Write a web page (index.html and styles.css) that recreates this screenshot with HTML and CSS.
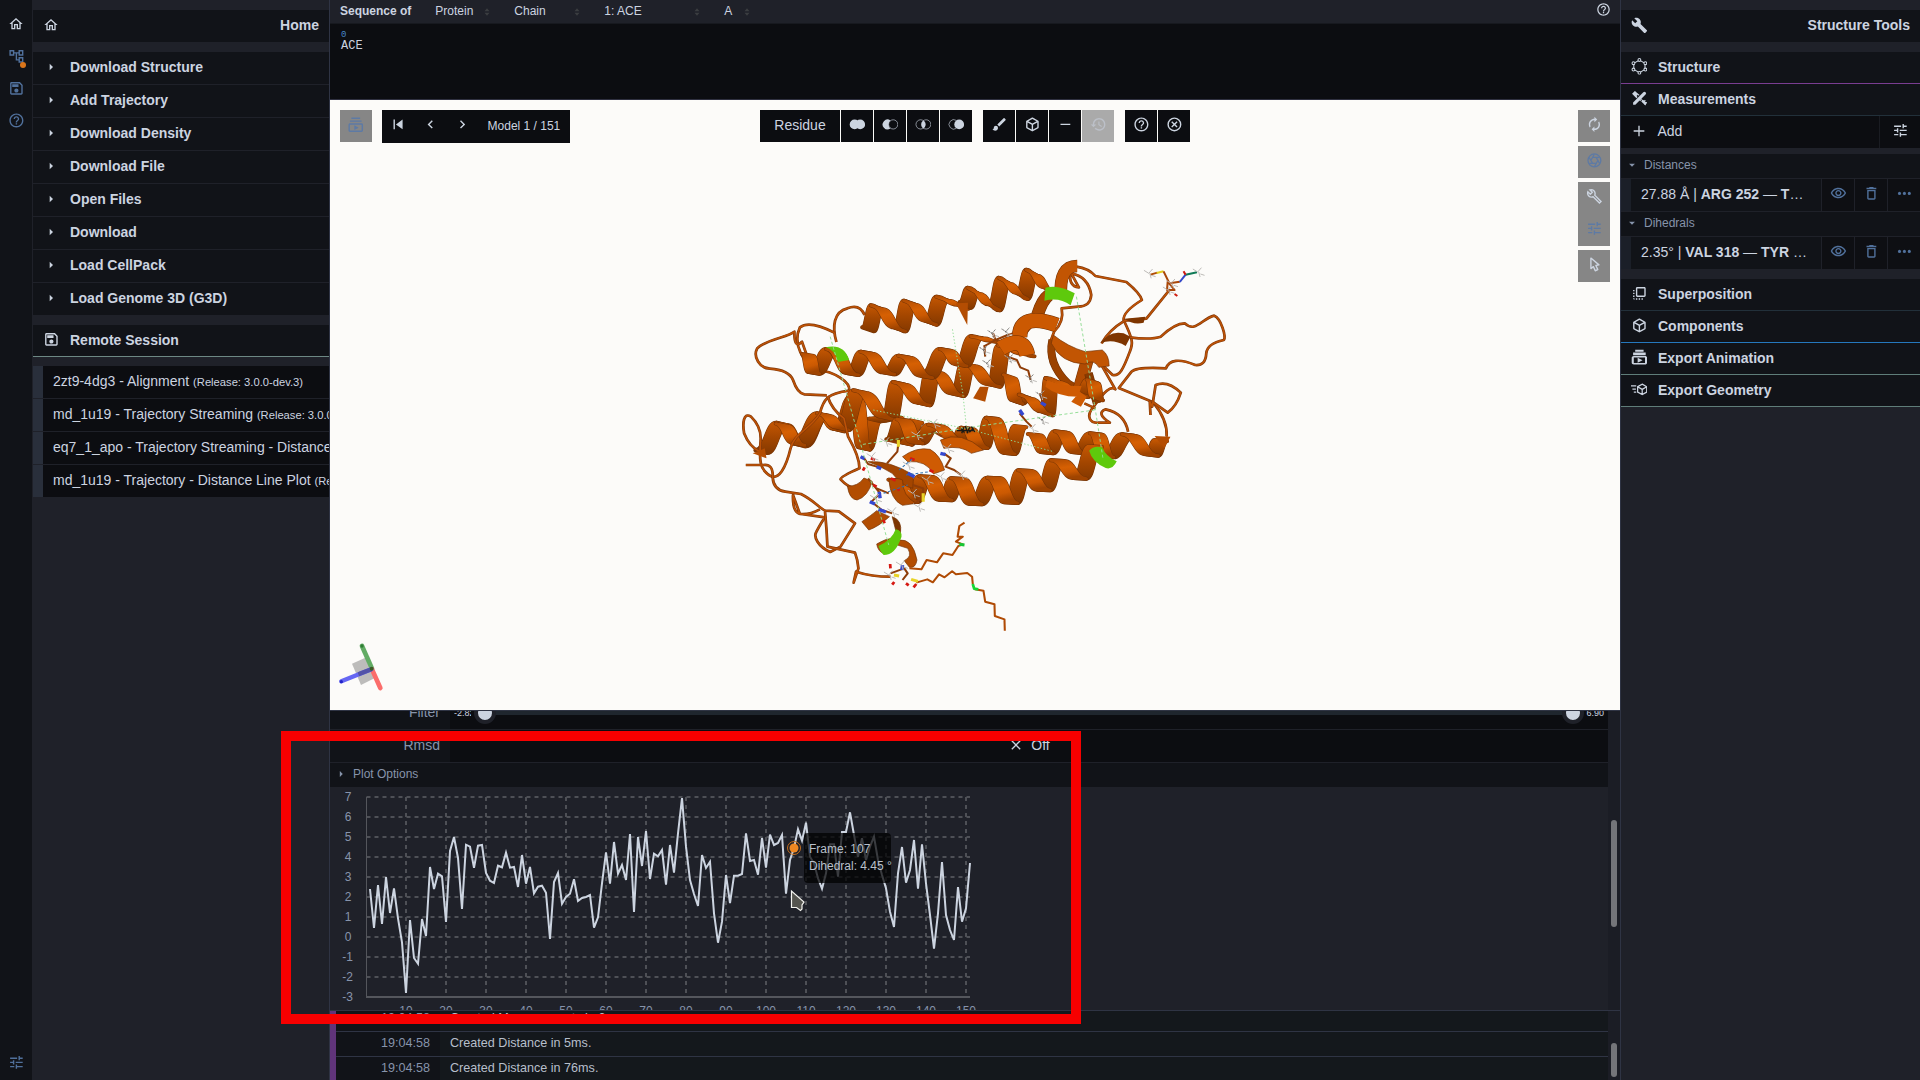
FILE: index.html
```html
<!DOCTYPE html>
<html lang="en">
<head>
<meta charset="utf-8">
<title>Mol* Viewer</title>
<link rel="stylesheet" href="styles.css">
</head>
<body>
<svg class="sprite" aria-hidden="true">
  <symbol id="home" viewBox="0 0 24 24"><path d="M12 5.69l5 4.5V18h-2v-6H9v6H7v-7.81l5-4.5M12 3L2 12h3v8h6v-6h2v6h6v-8h3L12 3z"/></symbol>
  <symbol id="tree" viewBox="0 0 24 24"><path d="M22 11V3h-7v3H9V3H2v8h7V8h2v10h4v3h7v-8h-7v3h-2V8h2v3h7zM7 9H4V5h3v4zm10 6h3v4h-3v-4zm0-10h3v4h-3V5z"/></symbol>
  <symbol id="save" viewBox="0 0 24 24"><path d="M17 3H5c-1.11 0-2 .9-2 2v14c0 1.1.89 2 2 2h14c1.1 0 2-.9 2-2V7l-4-4zm2 16H5V5h11.17L19 7.83V19zm-7-7c-1.66 0-3 1.34-3 3s1.34 3 3 3 3-1.34 3-3-1.34-3-3-3zM6 6h9v4H6z"/></symbol>
  <symbol id="help" viewBox="0 0 24 24"><path d="M11 18h2v-2h-2v2zm1-16C6.48 2 2 6.48 2 12s4.48 10 10 10 10-4.48 10-10S17.52 2 12 2zm0 18c-4.41 0-8-3.59-8-8s3.59-8 8-8 8 3.59 8 8-3.59 8-8 8zm0-14c-2.21 0-4 1.79-4 4h2c0-1.1.9-2 2-2s2 .9 2 2c0 2-3 1.75-3 5h2c0-2.25 3-2.5 3-5 0-2.21-1.79-4-4-4z"/></symbol>
  <symbol id="tune" viewBox="0 0 24 24"><path d="M3 17v2h6v-2H3zM3 5v2h10V5H3zm10 16v-2h8v-2h-8v-2h-2v6h2zM7 9v2H3v2h4v2h2V9H7zm14 4v-2H11v2h10zm-6-4h2V7h4V5h-4V3h-2v6z"/></symbol>
  <symbol id="wrench" viewBox="0 0 24 24"><path d="M22.7 19l-9.1-9.1c.9-2.3.4-5-1.5-6.9-2-2-5-2.4-7.4-1.3L9 6 6 9 1.6 4.7C.4 7.1.9 10.1 2.9 12.1c1.9 1.9 4.6 2.4 6.9 1.5l9.1 9.1c.4.4 1 .4 1.4 0l2.3-2.3c.5-.4.5-1.1.1-1.4z"/></symbol>
  <symbol id="wrench-line" viewBox="0 0 24 24"><path d="M21.5 19.2l-9-9c.9-2.3.4-4.600-1.2-6.200-1.600-1.600-3.800-2-5.800-1.400L9 6.200 6.200 9 2.600 5.500C2 7.500 2.400 9.700 4 11.300c1.600 1.600 3.900 2.100 6.200 1.200l9 9z" fill="none" stroke="currentColor" stroke-width="2"/></symbol>
  <symbol id="renew" viewBox="0 0 24 24"><path d="M12 6v3l4-4-4-4v3c-4.420 0-8 3.580-8 8 0 1.570.46 3.030 1.240 4.260L6.700 14.800c-.45-.83-.7-1.790-.7-2.800 0-3.310 2.690-6 6-6zm6.760 1.740L17.300 9.200c.44.84.7 1.790.7 2.800 0 3.310-2.690 6-6 6v-3l-4 4 4 4v-3c4.420 0 8-3.580 8-8 0-1.570-.46-3.030-1.240-4.260z"/></symbol>
  <symbol id="aperture" viewBox="0 0 24 24"><g fill="none" stroke="currentColor" stroke-width="1.800"><circle cx="12" cy="12" r="9.200"/><path d="M9.500 7.700h9.800M14.500 7.700l4.900 8.500M17 12l-4.900 8.800M14.500 16.300H4.700M9.500 16.300L4.600 7.800M7 12l4.900-8.800"/></g></symbol>
  <symbol id="eye" viewBox="0 0 24 24"><path d="M12 6c3.790 0 7.170 2.130 8.820 5.500C19.170 14.870 15.790 17 12 17s-7.170-2.130-8.820-5.500C4.830 8.130 8.210 6 12 6m0-2C7 4 2.730 7.110 1 11.500 2.730 15.890 7 19 12 19s9.270-3.110 11-7.500C21.270 7.110 17 4 12 4zm0 5c1.380 0 2.500 1.120 2.500 2.500S13.380 14 12 14s-2.500-1.120-2.500-2.500S10.620 9 12 9m0-2c-2.480 0-4.500 2.020-4.500 4.500S9.520 16 12 16s4.500-2.020 4.500-4.500S14.480 7 12 7z"/></symbol>
  <symbol id="trash" viewBox="0 0 24 24"><path d="M16 9v10H8V9h8m-1.500-6h-5l-1 1H5v2h14V4h-3.500l-1-1zM18 7H6v12c0 1.100.9 2 2 2h8c1.100 0 2-.9 2-2V7z"/></symbol>
  <symbol id="more" viewBox="0 0 24 24"><circle cx="5" cy="12" r="2.200"/><circle cx="12" cy="12" r="2.200"/><circle cx="19" cy="12" r="2.200"/></symbol>
  <symbol id="plus" viewBox="0 0 24 24"><path d="M20 13h-7v7h-2v-7H4v-2h7V4h2v7h7z"/></symbol>
  <symbol id="minus" viewBox="0 0 24 24"><path d="M19 13H5v-2h14z"/></symbol>
  <symbol id="close" viewBox="0 0 24 24"><path d="M19 6.410L17.590 5 12 10.590 6.410 5 5 6.410 10.590 12 5 17.590 6.410 19 12 13.410 17.590 19 19 17.590 13.410 12z"/></symbol>
  <symbol id="first" viewBox="0 0 24 24"><path d="M5 5h2v14H5zm3.500 7L18 19V5z"/></symbol>
  <symbol id="prev" viewBox="0 0 24 24"><path d="M15.410 7.410L14 6l-6 6 6 6 1.410-1.410L10.830 12z"/></symbol>
  <symbol id="next" viewBox="0 0 24 24"><path d="M10 6L8.590 7.410 13.170 12l-4.580 4.590L10 18l6-6z"/></symbol>
  <symbol id="right" viewBox="0 0 24 24"><path d="M10 17l5-5-5-5v10z"/></symbol>
  <symbol id="down" viewBox="0 0 24 24"><path d="M7 10l5 5 5-5z"/></symbol>
  <symbol id="sort" viewBox="4 1 16 22"><path d="M5 10l7-8 7 8zM5 14l7 8 7-8z"/></symbol>
  <symbol id="brush" viewBox="0 0 24 24"><path d="M7 14c-1.660 0-3 1.340-3 3 0 1.310-1.160 2-2 2 .92 1.220 2.490 2 4 2 2.210 0 4-1.790 4-4 0-1.660-1.340-3-3-3zm13.710-9.370l-1.340-1.340a.996.996 0 00-1.410 0L9 12.250 11.750 15l8.960-8.960a.996.996 0 000-1.410z"/></symbol>
  <symbol id="cube" viewBox="0 0 24 24"><path d="M21 16.500C21 16.880 20.790 17.210 20.470 17.380L12.570 21.820C12.410 21.940 12.210 22 12 22C11.790 22 11.590 21.940 11.430 21.820L3.530 17.380C3.210 17.210 3 16.880 3 16.500V7.500C3 7.120 3.210 6.790 3.530 6.620L11.430 2.180C11.590 2.060 11.790 2 12 2C12.210 2 12.410 2.060 12.570 2.180L20.470 6.620C20.790 6.790 21 7.120 21 7.500V16.500M12 4.150L6.040 7.500L12 10.850L17.960 7.500L12 4.150M5 15.910L11 19.290V12.580L5 9.210V15.910M19 15.910V9.210L13 12.580V19.290L19 15.910Z"/></symbol>
  <symbol id="history" viewBox="0 0 24 24"><path d="M13 3c-4.970 0-9 4.030-9 9H1l3.890 3.890.07.14L9 12H6c0-3.870 3.130-7 7-7s7 3.130 7 7-3.130 7-7 7c-1.930 0-3.680-.79-4.940-2.060l-1.420 1.420C8.270 19.990 10.510 21 13 21c4.970 0 9-4.030 9-9s-4.030-9-9-9zm-1 5v5l4.280 2.540.72-1.210-3.500-2.080V8H12z"/></symbol>
  <symbol id="cancel" viewBox="0 0 24 24"><g fill="none" stroke="currentColor" stroke-width="2"><circle cx="12" cy="12" r="9"/><path d="M8.200 8.200l7.600 7.600M15.800 8.200l-7.600 7.600"/></g></symbol>
  <symbol id="anim" viewBox="0 0 24 24"><path d="M4 6h16v2H4zM6 2h12v2H6zM20 10H4c-1.100 0-2 .9-2 2v8c0 1.100.9 2 2 2h16c1.100 0 2-.9 2-2v-8c0-1.100-.9-2-2-2zm0 10H4v-8h16v8zM10 12.700v6.600l6-3.300z"/></symbol>
  <symbol id="anim-bold" viewBox="0 0 24 24"><path d="M3 5h18v4H3zM6 1h12v3H6zM20 10H4c-1.500 0-3 1-3 2.500v7C1 21 2.500 22 4 22h16c1.500 0 3-1 3-2.500v-7c0-1.500-1.500-2.500-3-2.500zm0 10H4v-8h16v8zM9.500 12.500v7l7-3.500z"/></symbol>
  <symbol id="union" viewBox="0 0 24 24"><circle cx="8" cy="12" r="7"/><circle cx="16" cy="12" r="7"/></symbol>
  <symbol id="subtract" viewBox="0 0 24 24"><path d="M12 6.300A7 7 0 1 0 12 17.700A7.600 7.600 0 0 1 12 6.300z"/><circle cx="16" cy="12" r="6.600" fill="none" stroke="currentColor" stroke-width=".9"/></symbol>
  <symbol id="intersect" viewBox="0 0 24 24"><path d="M12 6.300a7 7 0 0 1 0 11.400a7 7 0 0 1 0-11.400z"/><g fill="none" stroke="currentColor" stroke-width=".9"><circle cx="8" cy="12" r="6.600"/><circle cx="16" cy="12" r="6.600"/></g></symbol>
  <symbol id="set" viewBox="0 0 24 24"><circle cx="16" cy="12" r="7"/><path d="M12 6.300A6.800 6.800 0 1 0 12 17.700" fill="none" stroke="currentColor" stroke-width=".9"/></symbol>
  <symbol id="ring" viewBox="0 0 24 24"><g fill="none" stroke="currentColor" stroke-width="1.500"><path d="M12 3l8 4.500v9L12 21l-8-4.500v-9z"/></g><g fill="#111318" stroke="currentColor" stroke-width="1.500"><circle cx="12" cy="2.800" r="2"/><circle cx="20.500" cy="7.500" r="2"/><circle cx="20.500" cy="16.500" r="2"/><circle cx="12" cy="21.200" r="2"/><circle cx="3.500" cy="16.500" r="2"/><circle cx="3.500" cy="7.500" r="2"/></g></symbol>
  <symbol id="ruler" viewBox="0 0 24 24"><path d="M20.800 3.200a2.200 2.200 0 0 0-3.200 0L3 17.800V21h3.200L20.800 6.400a2.200 2.200 0 0 0 0-3.200z"/><path d="M5.500 1.500L1.500 5.500l6.300 6.300 1.700-1.700-1.500-1.500 1.700-1.700 1.400 1.400 1.200-1.200zM6.500 2l-2 2 1.500 1.500 2-2zM14.500 16.200l6 6 2-4-5.800-4.600z"/><path d="M15.500 12.500l-3 3M17 18l3.500-3.500M19.500 20.500l3-3" stroke="currentColor" stroke-width="1.500"/></symbol>
  <symbol id="front" viewBox="0 0 24 24"><path d="M3 13h2v-2H3v2zm0 4h2v-2H3v2zm2 4v-2H3c0 1.100.89 2 2 2zM3 9h2V7H3v2zm12 12h2v-2h-2v2zm4-18H9c-1.110 0-2 .9-2 2v10c0 1.100.89 2 2 2h10c1.100 0 2-.9 2-2V5c0-1.100-.9-2-2-2zm0 12H9V5h10v10zm-8 6h2v-2h-2v2zm-4 0h2v-2H7v2z"/></symbol>
  <symbol id="geometry" viewBox="0 0 24 24"><g fill="none" stroke="currentColor" stroke-width="1.800"><path d="M16 4.500l6.500 3.700v7.600L16 19.500l-6.500-3.700V8.200zM9.500 8.200L16 12l6.500-3.800M16 12v7.500M0 7h7.500M2 11.500h5M4 16h3.500"/></g></symbol>
  <symbol id="cursor" viewBox="0 0 24 24"><path d="M10.070 14.270C10.570 14.030 11.160 14.250 11.400 14.750L13.700 19.740L15.500 18.890L13.190 13.910C12.950 13.410 13.170 12.810 13.670 12.580L13.950 12.500L16.250 12.050L8 5.120V15.900L9.820 14.430L10.070 14.270M13.640 21.970C13.140 22.210 12.540 22 12.310 21.500L10.130 16.760L7.620 18.780C7.450 18.920 7.240 19 7 19A1 1 0 0 1 6 18V3A1 1 0 0 1 7 2C7.240 2 7.470 2.090 7.640 2.230L19.140 11.860C19.570 12.220 19.620 12.850 19.270 13.270C19.120 13.450 18.910 13.570 18.700 13.610L15.540 14.230L17.740 18.960C18 19.460 17.760 20.050 17.260 20.280L13.640 21.970Z"/></symbol>
</svg>

<nav class="rail">
  <div class="rail-item active"><svg class="ic sm"><use href="#home"/></svg></div>
  <div class="rail-item"><svg class="ic"><use href="#tree"/></svg><i class="dot"></i></div>
  <div class="rail-item"><svg class="ic"><use href="#save"/></svg></div>
  <div class="rail-item"><svg class="ic"><use href="#help"/></svg></div>
  <div class="rail-item bottom"><svg class="ic"><use href="#tune"/></svg></div>
</nav>

<aside class="panel left">
  <header class="panel-title"><span class="lead"><svg class="ic sm"><use href="#home"/></svg></span><b>Home</b></header>
  <div class="actions">
    <div class="row"><span class="lead"><svg class="ic sm"><use href="#right"/></svg></span>Download Structure</div>
    <div class="row"><span class="lead"><svg class="ic sm"><use href="#right"/></svg></span>Add Trajectory</div>
    <div class="row"><span class="lead"><svg class="ic sm"><use href="#right"/></svg></span>Download Density</div>
    <div class="row"><span class="lead"><svg class="ic sm"><use href="#right"/></svg></span>Download File</div>
    <div class="row"><span class="lead"><svg class="ic sm"><use href="#right"/></svg></span>Open Files</div>
    <div class="row"><span class="lead"><svg class="ic sm"><use href="#right"/></svg></span>Download</div>
    <div class="row"><span class="lead"><svg class="ic sm"><use href="#right"/></svg></span>Load CellPack</div>
    <div class="row"><span class="lead"><svg class="ic sm"><use href="#right"/></svg></span>Load Genome 3D (G3D)</div>
  </div>
  <div class="row remote"><span class="lead"><svg class="ic"><use href="#save"/></svg></span>Remote Session</div>
  <div class="sessions">
    <div class="session">2zt9-4dg3 - Alignment <small>(Release: 3.0.0-dev.3)</small></div>
    <div class="session">md_1u19 - Trajectory Streaming <small>(Release: 3.0.0-dev.3)</small></div>
    <div class="session">eq7_1_apo - Trajectory Streaming - Distance</div>
    <div class="session">md_1u19 - Trajectory - Distance Line Plot <small>(Release: 3.0.0)</small></div>
  </div>
</aside>

<main class="center">
  <section class="sequence">
    <div class="seq-bar">
      <b>Sequence of</b>
      <span class="pick p1">Protein<svg><use href="#sort"/></svg></span>
      <span class="pick p2">Chain<svg><use href="#sort"/></svg></span>
      <span class="pick p3">1: ACE<svg><use href="#sort"/></svg></span>
      <span class="pick p4">A<svg><use href="#sort"/></svg></span>
      <svg class="ic sm seq-help"><use href="#help"/></svg>
    </div>
    <div class="seq-body"><span class="num">0</span><span>ACE</span></div>
  </section>

  <section class="viewport">
    <svg class="molecule" width="540" height="400" viewBox="0 0 1568 1200" preserveAspectRatio="none" id="molecule"></svg>
    <svg class="axes" width="80" height="80" viewBox="0 0 240 240">
      <path d="M66 101l40-18 27 62-40 20z" fill="#bdbcbb"/>
      <path d="M96 48l30 68" stroke="#62ab64" stroke-width="14" stroke-linecap="round"/>
      <path d="M126 118l25 56" stroke="#fb6d6b" stroke-width="14" stroke-linecap="round"/>
      <path d="M124 118L34 154" stroke="#6667f3" stroke-width="13" stroke-linecap="round"/>
      <path d="M124 118L85 133" stroke="#5353a8" stroke-width="13"/>
      <circle cx="96" cy="48" r="5" fill="#2f7d35"/><circle cx="34" cy="155" r="5" fill="#2424c8"/><circle cx="125" cy="116" r="6" fill="#3b5c23"/>
    </svg>
    <div class="toolbar">
      <div class="btn grey blue"><svg class="ic lg"><use href="#anim"/></svg></div>
      <div class="model">
        <svg class="ic"><use href="#first"/></svg><svg class="ic"><use href="#prev"/></svg><svg class="ic"><use href="#next"/></svg>
        <span>Model 1 / 151</span>
      </div>
      <div class="group g1">
        <div class="btn wide">Residue</div>
        <div class="btn"><svg class="ic"><use href="#union"/></svg></div>
        <div class="btn"><svg class="ic"><use href="#subtract"/></svg></div>
        <div class="btn"><svg class="ic"><use href="#intersect"/></svg></div>
        <div class="btn"><svg class="ic"><use href="#set"/></svg></div>
      </div>
      <div class="group g2">
        <div class="btn"><svg class="ic"><use href="#brush"/></svg></div>
        <div class="btn"><svg class="ic"><use href="#cube"/></svg></div>
        <div class="btn"><svg class="ic"><use href="#minus"/></svg></div>
        <div class="btn disabled"><svg class="ic"><use href="#history"/></svg></div>
      </div>
      <div class="group g3">
        <div class="btn"><svg class="ic"><use href="#help"/></svg></div>
        <div class="btn"><svg class="ic"><use href="#cancel"/></svg></div>
      </div>
      <div class="stack">
        <div class="btn grey"><svg class="ic"><use href="#renew"/></svg></div>
        <div class="btn grey blue"><svg class="ic"><use href="#aperture"/></svg></div>
        <div class="pair">
          <div class="btn grey"><svg class="ic"><use href="#wrench-line"/></svg></div>
          <div class="btn grey blue"><svg class="ic"><use href="#tune"/></svg></div>
        </div>
        <div class="btn grey"><svg class="ic"><use href="#cursor"/></svg></div>
      </div>
    </div>
  </section>

  <section class="plot-pane">
    <div class="pane-body">
      <div class="ctl filter"><label>Filter</label>
        <div class="ctl-val slider"><span class="lo">-2.82</span><div class="track"><i></i><i></i></div><span>6.90</span></div>
      </div>
      <div class="ctl"><label>Rmsd</label><div class="ctl-val toggle"><svg class="ic sm"><use href="#close"/></svg>Off</div></div>
      <div class="sub plot-options"><svg class="ic tiny"><use href="#right"/></svg>Plot Options</div>
      <div class="chart"><svg id="chart" width="680" height="240" viewBox="0 0 680 240"></svg></div>
    </div>
    <div class="scroll"><i class="thumb t1"></i></div>
  </section>

  <section class="log">
    <div class="pane-body">
      <div class="entry"><time>19:04:58</time><span>Created Measurements in 3ms.</span></div>
      <div class="entry"><time>19:04:58</time><span>Created Distance in 5ms.</span></div>
      <div class="entry"><time>19:04:58</time><span>Created Distance in 76ms.</span></div>
    </div>
    <div class="scroll"><i class="thumb t2"></i></div>
  </section>
</main>

<aside class="panel right">
  <header class="panel-title"><span class="lead"><svg class="ic"><use href="#wrench"/></svg></span><b>Structure Tools</b></header>
  <div class="row purple"><span class="lead"><svg class="ic"><use href="#ring"/></svg></span>Structure</div>
  <div class="row slate"><span class="lead"><svg class="ic"><use href="#ruler"/></svg></span>Measurements</div>
  <div class="add"><div class="add-main"><span class="lead"><svg class="ic sm"><use href="#plus"/></svg></span>Add</div><div class="add-opt"><svg class="ic"><use href="#tune"/></svg></div></div>
  <div class="sub"><svg class="ic tiny"><use href="#down"/></svg>Distances</div>
  <div class="measure"><div class="m-text">27.88 Å | <b>ARG 252</b> — <b>T</b>…</div><span><svg class="ic"><use href="#eye"/></svg></span><span><svg class="ic"><use href="#trash"/></svg></span><span><svg class="ic"><use href="#more"/></svg></span></div>
  <div class="sub second"><svg class="ic tiny"><use href="#down"/></svg>Dihedrals</div>
  <div class="measure"><div class="m-text">2.35° | <b>VAL 318</b> — <b>TYR</b> …</div><span><svg class="ic"><use href="#eye"/></svg></span><span><svg class="ic"><use href="#trash"/></svg></span><span><svg class="ic"><use href="#more"/></svg></span></div>
  <div class="row slate gap"><span class="lead"><svg class="ic"><use href="#front"/></svg></span>Superposition</div>
  <div class="row azure"><span class="lead"><svg class="ic"><use href="#cube"/></svg></span>Components</div>
  <div class="row teal"><span class="lead"><svg class="ic"><use href="#anim-bold"/></svg></span>Export Animation</div>
  <div class="row teal"><span class="lead"><svg class="ic"><use href="#geometry"/></svg></span>Export Geometry</div>
</aside>

<div class="highlight"></div>
<script src="script.js"></script>
</body>
</html>
```
FILE: styles.css
```css
* { box-sizing: border-box; }
body {
  margin: 0; width: 1920px; height: 1080px; overflow: hidden; display: flex; position: relative;
  background: #1f2129; color: #ccd4e0; font: 14px/32px "Liberation Sans", Arial, sans-serif;
}
svg { display: block; flex: none; }
.sprite { position: absolute; width: 0; height: 0; }
.ic { width: 16.8px; height: 16.8px; fill: currentColor; }
.ic.sm { width: 16px; height: 16px; }
.ic.lg { width: 17.500px; height: 17.500px; }
.ic.tiny { width: 14px; height: 14px; }

.rail { width: 33px; height: 1080px; background: #111318; border-right: 1px solid #1f2129; padding-top: 8px; display: flex; flex-direction: column; color: #51719c; }
.rail-item { height: 32px; display: flex; align-items: center; justify-content: center; position: relative; }
.rail-item.active { color: #ccd4e0; }
.rail-item.bottom { margin-top: auto; margin-bottom: 2px; }
.dot { position: absolute; left: 20px; top: 22px; width: 6px; height: 6px; border-radius: 3px; background: #d9751b; }

.panel { padding-top: 10px; overflow: hidden; line-height: 30px; }
.panel.left { width: 297px; border-right: 1px solid #2f3444; }
.panel.right { width: 300px; border-left: 1px solid #2f3444; }
.panel-title { height: 32px; margin-bottom: 10px; background: #111318; display: flex; justify-content: space-between; align-items: center; padding: 0 10px 2px 0; }
.lead { width: 36.500px; flex: none; display: flex; align-items: center; justify-content: center; }
.row { height: 32px; background: #111318; display: flex; align-items: center; font-weight: bold; padding-bottom: 2px; }
.row .lead { padding-right: .5px; margin-right: .5px; }
.actions { display: flex; flex-direction: column; gap: 1px; margin-bottom: 10px; }
.remote { border-bottom: 1px solid #6d8884; margin-bottom: 9px; }
.sessions { display: flex; flex-direction: column; gap: 1px; }
.session { height: 32px; background: #0c0d11; border-left: 10px solid #292f3b; padding-left: 10px; white-space: nowrap; overflow: hidden; }
.session small { font-size: 11.200px; }

.center { width: 1290px; height: 1080px; display: flex; flex-direction: column; }
.sequence { height: 100px; border-bottom: 1px solid #2f3040; background: #0c0d11; }
.seq-bar { height: 24px; display: flex; align-items: center; background: #1f2129; border-bottom: 1px solid #17191f; font-size: 12px; line-height: 18px; padding: 0 9px 1px 10px; }
.pick { display: flex; justify-content: space-between; align-items: center; }
.pick svg { width: 6px; height: 8px; fill: #3a3d40; margin-top: 2px; }
.p1 { width: 55px; margin-left: 24px; }
.p2 { width: 66px; margin-left: 24px; }
.p3 { width: 96px; margin-left: 24px; }
.p4 { width: 26px; margin-left: 24px; }
.seq-help { margin-left: auto; margin-top: -3px; }
.seq-help.ic { width: 15px; height: 15px; }
.seq-body { display: flex; flex-direction: column; padding: 6px 0 0 11px; font: 12px/13px "Liberation Mono", monospace; }
.seq-body .num { font-size: 9px; line-height: 10px; color: #4787c8; }

.viewport { height: 610px; background: #fcfbf9; position: relative; }
.molecule { position: absolute; left: 390px; top: 140px; overflow: visible; }
.axes { position: absolute; left: 0; top: 530px; }
.toolbar { position: relative; display: flex; align-items: flex-start; padding: 10px; }
.btn { width: 32px; height: 32px; background: #0c0d11; display: flex; align-items: center; justify-content: center; padding-bottom: 3px; }
.btn.wide { width: 80px; }
.btn.grey { background: #868686; }
.btn.blue { color: #5d7aa5; }
.btn.disabled { background: #aaa; color: #bcc0c8; }
.model { width: 188px; height: 33px; background: #0c0d11; margin-left: 10px; display: flex; align-items: center; gap: 15.400px; padding: 0 0 4px 8px; font-size: 12px; }
.model span { margin-left: 1px; padding-top: 2px; white-space: nowrap; line-height: 20px; }
.group { display: flex; gap: 1px; }
.g1 { margin-left: 190px; }
.g2 { margin-left: 11px; }
.g3 { margin-left: 11px; }
.stack { margin-left: auto; display: flex; flex-direction: column; gap: 4px; }

.plot-pane { height: 300px; border-top: 1px solid #2f3444; display: flex; overflow: hidden; }
.pane-body { flex: 1; overflow: hidden; }
.ctl { height: 32px; margin-bottom: 1px; display: flex; background: #111318; line-height: 30px; }
.ctl.filter { margin-top: -14px; }
.ctl label { width: 120px; padding-right: 10px; text-align: right; color: #8794ab; }
.ctl-val { flex: 1; background: #0c0d11; display: flex; align-items: center; padding-bottom: 2px; }
.slider { padding: 0 4px 0 4px; font-size: 9px; }
.slider .lo { width: 17px; overflow: hidden; }
.track { height: 4px; background: #1f262e; flex: 1; margin: 0 7px 0 8px; display: flex; justify-content: space-between; align-items: center; }
.track i { width: 22px; height: 22px; border-radius: 11px; background: #ccd4e0; border: 4px solid #1f2129; margin: 0 -5px; }
.toggle { justify-content: center; gap: 7px; }
.sub { height: 24px; background: #111318; color: #8794ab; font-size: 12px; line-height: 22px; display: flex; align-items: center; padding: 0 0 2px 4px; gap: 5px; }
.chart { height: 223px; }
.scroll { width: 12px; background: #1b1d25; position: relative; }
.thumb { position: absolute; left: 3px; width: 6px; border-radius: 3px; background: #747579; }
.t1 { top: 109px; height: 107px; }
.t2 { top: 32px; height: 34px; }
.chart text { font-size: 12px; fill: #8794ab; text-anchor: middle; }
.chart .tip text { fill: #b9c0cc; text-anchor: start; }

.log { height: 70px; border-top: 1px solid #2f3444; display: flex; overflow: hidden; font-size: 12.600px; line-height: 22px; }
.log .pane-body { background: #14181c; border-left: 6px solid #60347a; }
.entry { height: 25px; display: flex; border-bottom: 1px solid #2f3444; color: #b7bfcb; }
.entry:first-child { margin-top: -4px; }
.entry time { width: 104px; padding-right: 10px; background: #111318; text-align: right; color: #8794ab; }
.entry span { padding-left: 10px; }

.purple { border-bottom: 1px solid #7a3d91; }
.slate { border-bottom: 1px solid #22303a; }
.azure { border-bottom: 1px solid #2578bd; }
.teal { border-bottom: 1px solid #5f7d79; }
.add { height: 32px; display: flex; background: #0c0d11; margin-bottom: 6px; }
.add-main { flex: 1; display: flex; padding-bottom: 2px; }
.add-opt { width: 41px; border-left: 1px solid #1a1c22; display: flex; align-items: center; justify-content: center; padding-bottom: 3px; }
.measure { display: flex; gap: 1px; height: 32px; margin-top: 1px; border-left: 10px solid #1b1f28; }
.m-text { flex: 1; background: #111318; padding-left: 10px; white-space: nowrap; }
.measure span { width: 32px; background: #0e0f13; color: #51719c; display: flex; align-items: center; justify-content: center; padding-bottom: 3px; }
.second { margin-top: 1px; }
.gap { margin-top: 10px; }
.highlight { position: absolute; left: 281px; top: 731px; width: 800px; height: 293px; border: 10px solid #f70000; }
```
FILE: script.js
```js
// Dihedral plot: vertical sample positions, one per frame (60 units = 1 degree, 291 = +7).
const samples = [567,684,555,672,531,639,565,655,727,879,660,774,791,657,708,501,567,521,529,666,453,411,474,627,434,440,503,437,435,519,542,549,497,502,458,503,501,561,465,551,501,580,560,557,578,717,546,519,611,591,581,538,603,594,591,585,683,652,550,457,551,426,521,495,540,402,636,411,498,393,537,461,469,450,554,435,518,400,294,440,540,582,618,465,504,485,640,728,665,525,609,527,527,522,400,483,480,524,414,503,404,435,429,405,581,480,444,388,422,368,470,490,535,566,520,433,433,530,396,396,337,405,470,415,480,440,410,480,525,565,635,681,520,441,548,510,420,566,433,550,645,746,640,486,645,690,720,561,665,625,489];
const fx = f => 36 + 4 * f;
const vy = v => 10 + (7 - v) * 20;
let s = '<g stroke="#4e5056" stroke-width="2" stroke-dasharray="4 4">';
for (let v = 7; v > -3; v--) s += `<path d="M36.500 ${vy(v)}H640"/>`;
for (let f = 10; f <= 150; f += 10) s += `<path d="M${fx(f)} 10V210"/>`;
s += '</g><path d="M36.500 10V211" stroke="#54565c"/><path d="M36 210H640" stroke="#54565c" stroke-width="2"/>';
for (let v = 7; v >= -3; v--) s += `<text x="${v < 0 ? 17.500 : 18}" y="${vy(v) + 4}">${v}</text>`;
for (let f = 10; f <= 150; f += 10) s += `<text x="${fx(f)}" y="228">${f}</text>`;
s += `<polyline fill="none" stroke="#ccd4e0" stroke-width="2" points="${samples.map((y, i) => fx(i + 1) + ',' + ((y - 291) / 3 + 10).toFixed(1)).join(' ')}"/>`;
s += '<circle cx="464" cy="61" r="4.500" fill="#ee8722"/><circle cx="464" cy="61" r="6.500" fill="none" stroke="#c46d1c"/>';
s += '<g class="tip"><rect x="474" y="46" width="87" height="50" rx="4" fill="#000" fill-opacity=".72"/><text x="479" y="66">Frame: 107</text><text x="479" y="83">Dihedral: 4.45 °</text></g>';
s += '<path d="M461.500 104v16.500h5l4 3 1.500-1.500v-4l2-3z" fill="#55554f" stroke="#f4f4f0" stroke-width="1.200"/>';
document.getElementById('chart').innerHTML = s;

// Cartoon helices: alternating extreme points, rising strands lie behind falling ones.
const helices = [
  { v: [17, 4], p: [[120,635],[180,552],[232,615],[300,525],[345,570],[395,475],[418,625],[450,540],[510,530],[540,610],[570,545]] },
  { v: [18, 4], p: [[180,555],[228,612],[300,524],[356,566],[405,455],[490,535],[520,430],[592,492],[620,395],[690,464],[722,375],[796,436],[825,320],[895,345]] },
  { v: [17, 3], p: [[255,345],[272,398],[325,330],[385,402],[425,338],[490,400],[535,350],[600,410],[655,330],[700,375],[745,292],[800,305]] },
  { v: [17, 6], p: [[430,268],[455,202],[522,268],[550,188],[612,248],[645,176],[705,200]] },
  { v: [16, 9], p: [[712,195],[735,152],[797,202],[825,122],[878,168],[905,98],[955,150]] },
  { v: [17, 2], p: [[500,600],[530,540],[572,608],[622,556],[690,600],[716,565],[760,622],[790,535],[840,640],[872,560]] },
  { v: [18, 2], p: [[912,584],[950,638],[990,576],[1040,638],[1092,582],[1125,650],[1185,585],[1255,645],[1280,602]] },
  { v: [19, 1], p: [[508,720],[555,785],[598,710],[655,780],[690,716],[742,792],[795,714],[845,788],[885,692],[940,750],[980,662],[1045,715],[1090,620]] },
  { v: [17, 6], p: [[840,410],[862,485],[885,470],[950,520],[962,420],[1052,465],[1082,425],[1095,475]] }
];
// Outline of one strand: the axis curve swept by the ribbon's half-width vector.
const strand = (a, b, v) => {
  const k = (b[0] - a[0]) * .5;
  const c = (x, y, q, r, z) => `${x + z * v[0]} ${y + z * v[1]}`;
  const P = (x, y, z) => `${x + z * v[0]} ${y + z * v[1]}`;
  return `M${P(a[0], a[1], -1)}C${P(a[0] + k, a[1], -1)} ${P(b[0] - k, b[1], -1)} ${P(b[0], b[1], -1)}L${P(b[0], b[1], 1)}C${P(b[0] - k, b[1], 1)} ${P(a[0] + k, a[1], 1)} ${P(a[0], a[1], 1)}Z`;
};
const ribbon = (d, c) => `<path d="${d}" fill="#743204" stroke="#743204" stroke-width="12" stroke-linejoin="round"/><path d="${d}" fill="${c}" stroke="${c}" stroke-width="9" stroke-linejoin="round"/>`;
let m = `<defs>
<linearGradient id="front-face" x1="0" y1="0" x2=".25" y2="1"><stop offset="0" stop-color="#b34e03"/><stop offset=".45" stop-color="#d66003"/><stop offset=".7" stop-color="#cb5902"/><stop offset="1" stop-color="#a04400"/></linearGradient>
<linearGradient id="back-face" x1="0" y1="0" x2="0" y2="1"><stop offset="0" stop-color="#c35602"/><stop offset=".5" stop-color="#a34600"/><stop offset="1" stop-color="#853900"/></linearGradient></defs>`;
const coil = d => `<path d="${d}" fill="none" stroke="#81390a" stroke-width="8" stroke-linejoin="round"/><path d="${d}" fill="none" stroke="#be5206" stroke-width="4.500" stroke-linejoin="round"/>`;
const band = (d, w, c) => `<path d="${d}" fill="none" stroke="#6f3004" stroke-width="${w + 3}"/><path d="${d}" fill="none" stroke="${c}" stroke-width="${w}"/>`;
m += [
  'M338 306C325 260 330 215 370 205Q405 190 420 225',
  'M375 452C380 425 330 395 285 390C240 370 210 310 232 262Q260 240 332 278',
  'M250 340L238 305Q215 330 216 275C200 290 130 300 108 325C95 350 115 385 145 386Q200 390 212 420Q225 460 245 463L310 466',
  'M1035 80Q1070 85 1090 108L1180 126Q1220 160 1225 180Q1170 215 1172 240C1200 300 1200 310 1190 335C1170 390 1160 410 1140 405L1110 375',
  'M1018 90Q1010 140 1042 142L1020 100Q1070 110 1078 165Q1075 200 1040 200L992 205Q1000 245 970 275Q950 320 962 370',
  'M1305 150L1238 236L1175 242Q1130 270 1108 310',
  'M1190 292Q1250 300 1280 290Q1320 250 1350 250C1380 280 1400 235 1435 227C1455 235 1470 290 1463 300Q1415 310 1412 340Q1410 378 1380 375Q1310 345 1295 385Q1210 380 1195 395L1158 444L1258 487Q1300 540 1297 590',
  'M1250 525L1248 485L1255 500L1265 435Q1300 420 1338 458Q1325 500 1300 518L1258 487',
  'M1102 365L1148 448Q1130 430 1085 500C1060 530 1075 550 1100 548H1132Q1090 520 1120 508Q1175 520 1185 575',
  'M1058 490L1090 505', 'M912 250L880 288'
].map(coil).join('');
m += band('M965 300Q950 370 1010 430L1050 455', 20, '#9b4200') + band('M1072 340L1042 450', 34, '#b04b02') + band('M1070 400L1095 490', 22, '#8a3b00');
for (const h of helices) {
  let back = '', front = '';
  for (let i = 0; i + 1 < h.p.length; i++) {
    const d = strand(h.p[i], h.p[i + 1], h.v);
    if (h.p[i + 1][1] < h.p[i][1]) back += ribbon(d, 'url(#back-face)');
    else front += ribbon(d, 'url(#front-face)');
  }
  m += back + front;
}
m += band('M990 165Q985 78 1037 78', 34, '#c25503') + band('M955 165Q935 180 922 225', 34, '#a84901')
  + band('M870 292Q870 215 978 255', 42, '#cb5902') + band('M815 325Q880 285 892 345', 44, '#cf5b03')
  + '<path d="M968 285Q1010 320 1060 335L1110 330Q1130 345 1130 378L1100 382Q1085 355 1060 372Q990 370 962 310z" fill="#c25503" stroke="#743204" stroke-width="2"/>'
  + '<path d="M950 420Q1000 440 1050 438L1040 470Q980 470 945 440zM1045 455L1065 470L1048 500L1020 485z" fill="#cf5b03"/>'
  + '<path d="M640 600Q700 570 765 630L730 640Q700 615 650 625z" fill="#cb5902" stroke="#743204" stroke-width="2"/>';
m += [
  'M375 452C310 460 300 480 290 520C260 570 215 580 205 625C190 690 170 715 150 710C110 690 115 650 118 600Q120 560 90 530C68 515 65 550 70 580Q85 620 115 635',
  'M75 675H125Q155 670 153 712Q155 750 190 755L235 762C270 780 285 800 305 812L345 814L392 850L350 920L320 936C285 920 270 890 280 875Q295 845 305 832L235 822Q210 820 212 765L232 822Q260 825 290 808',
  'M305 815Q310 870 312 920L392 938Q400 960 402 985L388 1028L395 995Q440 1010 495 1010',
  'M312 468Q325 510 360 535L372 590Q405 650 405 685Q350 710 350 718Q370 740 395 748'
].map(coil).join('');
m += '<g fill="#b24d02" stroke="#743204" stroke-width="2"><path d="M370 738Q400 740 418 714L442 724Q430 770 398 780Q375 778 370 738z"/><path d="M412 845Q440 825 455 812L492 830Q460 860 432 870z"/><path d="M430 665Q490 660 562 705L560 745Q530 740 500 700Q470 680 430 665z" fill="#a34500"/><path d="M530 650Q570 620 610 628Q640 645 652 690L620 702Q600 660 545 665z" fill="#cf5b03"/><path d="M490 718Q515 712 530 720Q530 770 570 790L530 796Q495 780 490 718z"/><path d="M500 830Q530 840 524 880L510 870z" fill="#7e3500"/><path d="M455 912Q480 895 505 895L470 930L478 942Q458 935 455 912zM520 900Q560 895 572 960Q568 985 550 982L535 962Q560 950 545 925L515 915z"/></g>';
m += '<g fill="#b44d02"><path d="M1105 310Q1130 270 1172 280L1192 290L1178 318Q1140 295 1105 310z" fill="#7e3500"/><path d="M1175 236L1235 230L1230 248Q1200 256 1175 236z" fill="#7e3500"/><path d="M95 640L130 625L135 655z"/><path d="M1262 588L1308 590L1290 625z"/><path d="M685 190L720 188L718 255z"/><path d="M755 440L780 440L770 485L735 475z"/></g>';
m += '<g fill="#5ec90c"><path d="M945 143Q985 133 1030 160L1018 196Q985 170 942 182z"/><path d="M307 322Q360 310 375 360L342 366Q335 330 307 322z"/><path d="M1072 632Q1085 615 1110 622Q1120 650 1152 664Q1140 690 1120 684Q1080 665 1072 632z"/><path d="M460 918Q500 900 510 868Q528 870 527 890Q510 945 475 945Q465 935 460 918z"/></g>';
// Side chains and lipid tails.
const stick = (d, c, w = 6) => `<path d="${d}" fill="none" stroke="${c}" stroke-width="${w}" stroke-linejoin="round"/>`;
m += stick('M550 985L585 988L600 960L630 967L648 940L675 945L692 918L705 913L685 905L705 890L690 890L695 858L710 848', '#b04b05')
  + stick('M570 1028L602 1018L618 1027L636 1003L652 1012L674 994L685 1003L718 999L732 1010L734 1032', '#b04b05')
  + stick('M740 1048L765 1052L770 1085L797 1093L798 1128L826 1138L827 1172', '#b04b05')
  + stick('M734 1032L738 1046L750 1048', '#18d634', 8) + stick('M695 913L710 915', '#18c634', 9)
  + stick('M1250 104L1270 98', '#b04b05') + stick('M1268 99L1288 94', '#e4cf23') + stick('M1288 94L1305 130L1335 125M1300 125L1320 150L1298 150z', '#a9470a')
  + stick('M1335 126L1352 104', '#3548c8') + stick('M1352 104L1385 97', '#0f7a56') + stick('M1352 104L1346 94M1320 162L1328 168', '#d01c10')
  + stick('M765 320L800 300L835 285L850 280M770 350L768 322M800 300L793 280M835 350L862 360L872 382L895 392L902 420M928 460L940 490M905 560L890 545L870 520', '#8f3d08')
  + stick('M415 650L430 672L462 682M485 670L515 635L518 610L480 600M560 735L590 745L588 770L568 790M650 640L670 655L655 680L680 690L700 705M590 600L620 575L645 590M430 715L465 760L440 785L470 810L500 820M455 745L490 760M495 1000L535 985L545 1000L530 1020', '#8f3d08')
  + stick('M518 600L518 620M590 760L590 785M505 1005L520 1008M555 1018L575 1024', '#e8d326', 9)
  + stick('M408 650L420 656M455 680L468 686M640 640L655 644M545 700L565 710M435 785L450 792M460 808L482 816M462 755L465 775M870 510L880 525M932 488L946 496M530 975L528 990', '#3548d0', 10)
  + stick('M438 655L450 660M415 692L420 682M552 655L565 660M496 715L510 722M608 690L620 696M445 735L455 740M474 840L478 850M494 972L495 985M500 1034L506 1026M540 1030L548 1036M562 1042L570 1032M515 750L522 748', '#d61812', 8);
const hyd = [[440,650],[480,605],[545,675],[600,720],[575,800],[500,815],[640,710],[700,705],[660,625],[620,550],[570,585],[560,760],[790,280],[765,330],[775,370],[840,355],[830,275],[930,465],[935,540],[900,415],[1245,100],[1310,130],[1387,96],[525,975],[490,1005],[1300,150],[905,565],[450,775]];
m += '<g stroke="#b9b7b4" stroke-width="2.800">' + hyd.map(([x, y]) => `<path d="M${x} ${y}l-14 -9M${x} ${y}l11 -13M${x + 3} ${y}l4 15M${x + 8} ${y + 6}l12 4"/>`).join('') + '</g>';
m += '<g fill="none" stroke="#4a4744" stroke-width="2" stroke-dasharray="4 4">' + hyd.slice(12, 20).map(([x, y]) => `<path d="M${x} ${y}l-12 -9M${x} ${y}l10 -12M${x} ${y}l4 15"/>`).join('') + '</g>';
m += '<g fill="none" stroke="#8fdc92" stroke-width="2.800" stroke-dasharray="9 7"><path d="M1035 170L1090 510L1112 655M1088 510L740 560L410 614M320 290L370 470L412 625L490 915"/><path d="M445 510L716 566L965 634M675 268L705 460L716 566" stroke-dasharray="4 6"/></g>';
m += '<path d="M475 760L545 735M540 705L610 695M520 690L560 655" stroke="#2c6fb0" stroke-width="3" stroke-dasharray="8 6"/>';
m += '<g stroke="#1b1a15" stroke-width="4"><path d="M688 572h50M700 566l10 12M712 558l8 22M725 562l-8 18M730 560l10 16M708 562l-6 18M736 565l-12 12"/></g>';
document.getElementById('molecule').innerHTML = m;
```
